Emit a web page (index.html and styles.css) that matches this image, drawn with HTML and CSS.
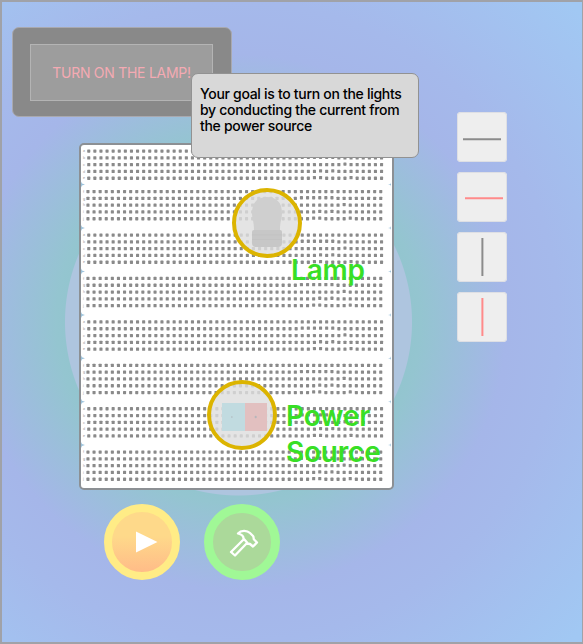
FILE: index.html
```html
<!DOCTYPE html>
<html lang="en">
<head>
<meta charset="utf-8">
<title>Turn on the lamp</title>
<link rel="stylesheet" href="styles.css">
</head>
<body>
<main class="game">
  <header class="display"><div class="display-screen">TURN ON THE LAMP!</div></header>
  <aside class="hint">Your goal is to turn on the lights by conducting the current from the power source</aside>
  <div class="play-area">
    <section class="board">
      <svg class="holes" viewBox="0 0 310 342" aria-hidden="true"></svg>
      <div class="node lamp">
        <svg viewBox="0 0 70 70" aria-hidden="true">
          <path d="M20 25C20 14 26 9 35 9s15 5 15 16c0 6-2 8-2 17H22c0-9-2-11-2-17Z" fill="#cfcfcf"/>
          <path d="M20 44q0-2 2-2h26q2 0 2 2v11q0 4-4 4H24q-4 0-4-4Z" fill="#c7c7c7"/>
          <path d="M20 47h30M20 51.500h30" stroke="#c1c1c1" stroke-width=".7"/>
        </svg>
      </div>
      <div class="node source">
        <svg viewBox="0 0 70 70" aria-hidden="true">
          <path d="M15 23h23v28H15Z" fill="#c1dbe0"/><path d="M38 23h22v28H38Z" fill="#e2c0c0"/>
          <path d="M24 37h1.600M47.500 37h2.400M48.700 35.800v2.400" stroke="#b0b6bb" stroke-width="1"/>
        </svg>
      </div>
      <span class="label lamp-label">Lamp</span>
      <span class="label source-label">Power Source</span>
    </section>
    <nav class="wires">
      <button class="wire" aria-label="Horizontal black wire"><svg viewBox="0 0 50 50"><path d="M6 27.200h38" stroke="#8b8b8b"/></svg></button>
      <button class="wire" aria-label="Horizontal red wire"><svg viewBox="0 0 50 50"><path d="M8 26.300h38" stroke="#ff8a8a"/></svg></button>
      <button class="wire" aria-label="Vertical black wire"><svg viewBox="0 0 50 50"><path d="M25.400 6v38" stroke="#8b8b8b"/></svg></button>
      <button class="wire" aria-label="Vertical red wire"><svg viewBox="0 0 50 50"><path d="M25.400 6v38" stroke="#ff8a8a"/></svg></button>
    </nav>
  </div>
  <footer class="actions">
    <button class="action play" aria-label="Play"><svg viewBox="0 0 76 76"><path d="M32 27.500v21L53.500 38Z" fill="#fff"/></svg></button>
    <button class="action build" aria-label="Build"><svg viewBox="0 0 76 76"><path d="M34 29.500C37 26 43 26 46 29l3 3c.8 1 .5 2 .8 3.200l3.200 3.300-4 4-3-2.500-3.500-.5L31 51.500 27 48l12.500-12.500c.5-3-1.500-5-5.500-6ZM40 35l3.500 4" fill="none" stroke="#fff" stroke-width="2.300" stroke-linejoin="round"/></svg></button>
  </footer>
</main>
<script src="board.js"></script>
</body>
</html>
```

FILE: styles.css
```css
* { box-sizing: border-box; }
body { margin: 0; font-family: Inter, "Liberation Sans", sans-serif; }
button { padding: 0; border: 0; display: block; }
svg { display: block; }
.game {
  position: relative;
  width: 583px;
  height: 644px;
  padding: 25px 0 0 10px;
  border: 2px solid #a0a2a8;
  border-right-width: 1px;
  overflow: hidden;
  background: radial-gradient(circle at 236.500px 320px, #aec5df 0 173px, #93c5cf 174px, #94c5d0 182px, #a5b6e9 268px, #a5b9eb 320px, #a1c8f3 460px);
}
.display {
  width: 220px;
  height: 90px;
  padding: 16px 18px 16px 17px;
  border: 1px solid #a9a9af;
  border-radius: 7px;
  background: #898989;
}
.display-screen {
  height: 57px;
  width: 183px;
  border: 1px solid #b4b4b4;
  background: #9d9d9d;
  color: #f4aab3;
  font-size: 14px;
  letter-spacing: -.28px;
  line-height: 55px;
  text-align: center;
  white-space: nowrap;
}
.hint {
  position: absolute;
  left: 189px;
  top: 71px;
  z-index: 2;
  width: 228px;
  height: 85px;
  padding: 12px 8px;
  border: 1px solid #929292;
  border-radius: 7px;
  background: #d8d8d8;
  color: #000;
  font-size: 14px;
  font-weight: 500;
  letter-spacing: -.3px;
  line-height: 16px;
}
.play-area { display: flex; align-items: flex-start; margin: 26px 0 0 67px; }
.board {
  position: relative;
  width: 315px;
  height: 347px;
  border: 2px solid #8c9094;
  border-radius: 5px;
  background: #fff;
}
.holes { width: 310px; height: 342px; }
.node {
  position: absolute;
  width: 70px;
  height: 70px;
  border: 4px solid #dcb400;
  border-radius: 50%;
  background: rgba(222, 222, 222, .82);
}
.node svg { width: 70px; height: 70px; margin: -4px; }
.lamp { left: 151px; top: 43px; }
.source { left: 126px; top: 235px; }
.label {
  position: absolute;
  color: #38df25;
  font-size: 28px;
  font-weight: 600;
  letter-spacing: -.2px;
  line-height: 36px;
}
.lamp-label { left: 210px; top: 107px; }
.source-label { left: 205px; top: 253px; width: 105px; }
.wires { display: grid; gap: 10px; margin: -31px 0 0 63px; }
.wire {
  width: 50px;
  height: 50px;
  border-radius: 4px;
  background: #eee;
  box-shadow: inset 0 0 0 1px #dedfe4;
}
.wire path { stroke-width: 2; }
.actions { display: flex; gap: 24px; margin: 14px 0 0 92px; }
.action { width: 76px; height: 76px; border-radius: 50%; }
.play { border: 8px solid #ffec86; background: linear-gradient(#fed98a 40%, #ffbc88); }
.build { border: 9px solid #a0f896; background: #abd99a; }
.play svg { width: 76px; height: 76px; margin: -8px; }
.build svg { width: 76px; height: 76px; margin: -9px; }
```

FILE: board.js
```js
const holes = document.querySelector('.holes');
const ns = 'http://www.w3.org/2000/svg';
const bankTops = [6, 46.5, 90, 133.4, 176.9, 220.3, 263.7, 307];
// Columns whose holes sit slightly high, by row.
const raised = [[], [35, 36, 37, 38, 39, 40], [42], [38, 40], [37, 38, 43]];
function shape(name, attrs) {
  const node = document.createElementNS(ns, name);
  Object.entries(attrs).forEach(([key, value]) => node.setAttribute(key, value));
  holes.append(node);
  return node;
}
bankTops.forEach((top, bank) => {
  for (let row = 0; row < 5; row++) {
    const y = top + row * 6.8;
    for (let col = 0; col < 49; col++) {
      const dy = raised[row].includes(col) ? -0.6 : 0;
      shape('rect', { x: 6.2 - (bank % 2) * 0.8 + col * 6.1, y: y - 1.6 + dy, width: 3.1, height: 3.3, rx: 0.6, fill: '#8a8a8a' });
    }
    const mark = shape('text', { x: 2, y: y + 1.2, 'font-size': 3.5, fill: '#999' });
    mark.textContent = (bank % 2 ? 'fghij' : 'abcde')[row];
  }
  if (bank) {
    const y = top - 7;
    shape('path', { d: `M0 ${y - 3}l1 2 3 1-3 1-1 2Z`, fill: '#9dc3dc' });
    shape('path', { d: `M310 ${y - 2}l-.5 1.5-2.5.5 2.5.5.5 1.5Z`, fill: '#9dc3dc' });
  }
});
```
